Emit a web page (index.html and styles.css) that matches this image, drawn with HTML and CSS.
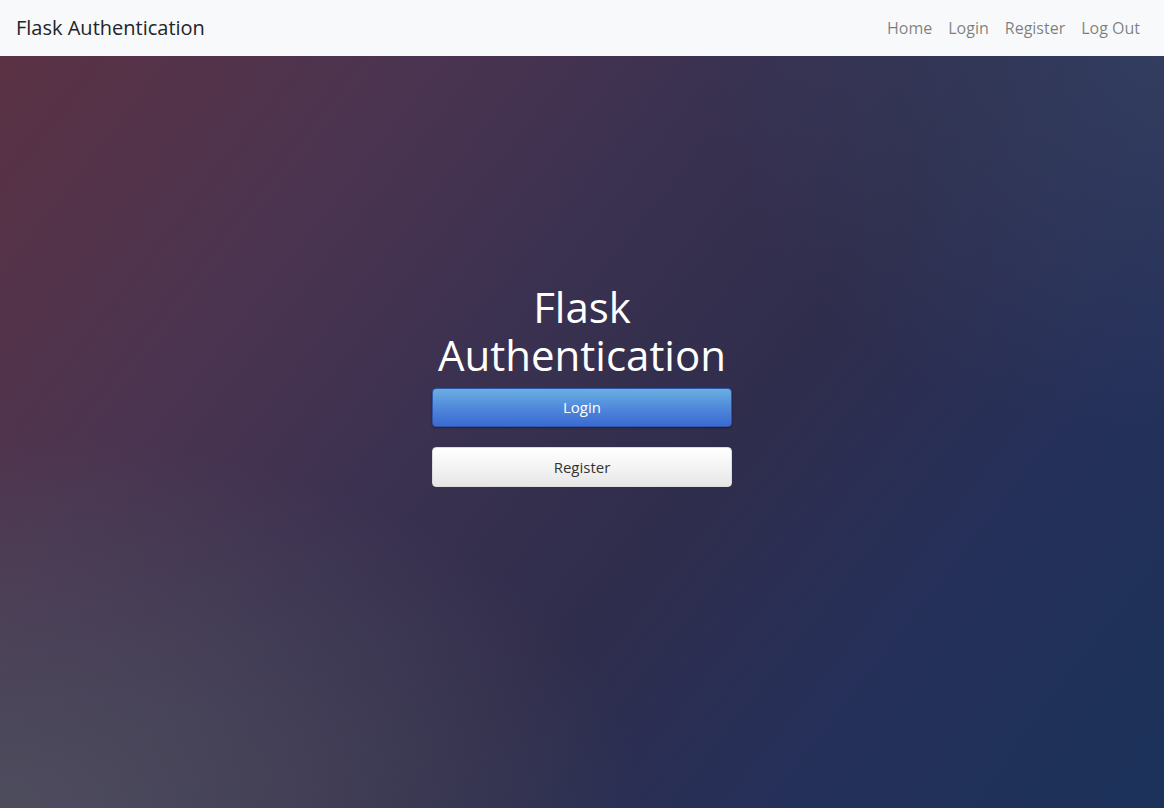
FILE: index.html
```html
<!DOCTYPE html>
<html lang="en">
<head>
<meta charset="utf-8">
<title>Flask Authentication</title>
<link rel="stylesheet" href="styles.css">
</head>
<body>
<nav class="navbar">
  <a class="brand" href="#">Flask Authentication</a>
  <ul class="nav">
    <li><a href="#">Home</a></li>
    <li><a href="#">Login</a></li>
    <li><a href="#">Register</a></li>
    <li><a href="#">Log Out</a></li>
  </ul>
</nav>
<main class="hero">
  <div class="hero-box">
    <h1 class="title">Flask Authentication</h1>
    <a class="btn btn-primary" href="#">Login</a>
    <a class="btn btn-light" href="#">Register</a>
  </div>
</main>
</body>
</html>
```
FILE: styles.css
```css
* { box-sizing: border-box; }
html, body { margin: 0; height: 100%; }
body {
  font-family: "Open Sans", "Noto Sans", sans-serif;
  display: flex;
  flex-direction: column;
  min-height: 808px;
}
a { text-decoration: none; }
.navbar {
  height: 56px;
  background: #f8f9fa;
  display: flex;
  align-items: center;
  justify-content: space-between;
  padding: 0 16px;
  flex: none;
}
.brand {
  font-size: 20px;
  color: #212529;
  line-height: 30px;
}
.nav {
  display: flex;
  list-style: none;
  margin: 0;
  padding: 0;
}
.nav a {
  display: block;
  padding: 8px;
  font-size: 16px;
  color: rgba(0,0,0,0.5);
  line-height: 24px;
}
.hero {
  flex: 1;
  background:
    radial-gradient(ellipse 55% 50% at 0% 100%, rgba(78,78,94,0.95) 0%, rgba(78,78,94,0.6) 40%, rgba(78,78,94,0) 100%),
    radial-gradient(ellipse 40% 50% at 100% 0%, rgba(52,66,100,0.75) 0%, rgba(52,66,100,0) 100%),
    linear-gradient(128deg, #5b3244 0%, #4b3450 24%, #3a3150 42%, #302d4c 58%, #25305a 78%, #1b3259 100%);
  display: flex;
  justify-content: center;
  padding-top: 227px;
}
.hero-box {
  width: 300px;
  display: flex;
  flex-direction: column;
  align-items: stretch;
}
.title {
  margin: 0 0 9px;
  font-size: 42px;
  font-weight: 400;
  line-height: 48px;
  color: #fff;
  text-align: center;
}
.btn {
  display: block;
  height: 40px;
  line-height: 38px;
  border-radius: 4px;
  text-align: center;
  font-size: 15px;
}
.btn-primary {
  color: #fff;
  background: linear-gradient(to bottom, #6aafe2 0%, #4d86d9 55%, #3b6ad3 100%);
  border: 1px solid #2f56a8;
  box-shadow: 0 1px 2px rgba(0,0,0,0.35);
  height: 39px;
  line-height: 37px;
}
.btn-light {
  margin-top: 20px;
  color: #333;
  background: linear-gradient(to bottom, #ffffff 0%, #f4f4f4 50%, #e6e6e6 100%);
  border: 1px solid #dcdcdc;
}
```
